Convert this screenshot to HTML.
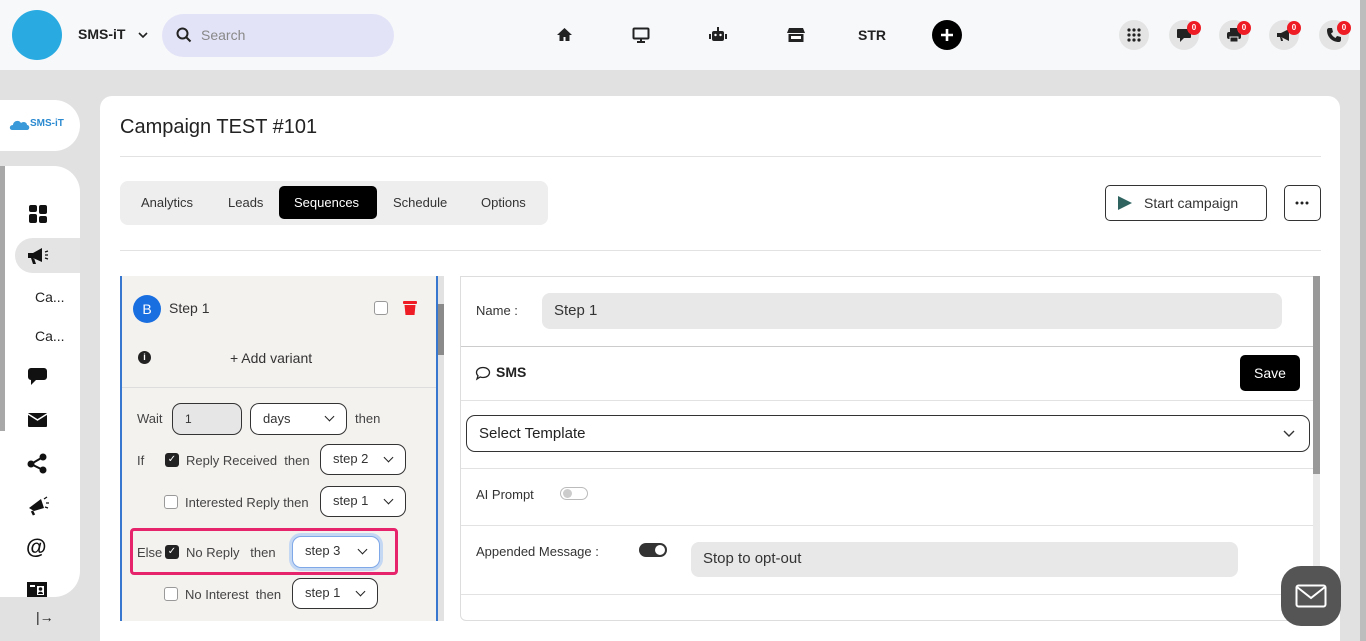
<!DOCTYPE html>
<html style="overflow:hidden;width:1366px;height:641px"><head><meta charset="utf-8"><style>
*{box-sizing:border-box;margin:0;padding:0}
body{width:1366px;height:641px;overflow:hidden;background:#e1e1e1;font-family:"Liberation Sans",sans-serif;color:#222;position:relative}
.a{position:absolute}
.top{left:0;top:0;width:1360px;height:70px;background:#f7f8fa}
.ic{width:30px;height:30px;border-radius:50%;background:#e4e4e4}
.badge{width:14px;height:14px;border-radius:50%;background:#ee1c25;color:#fff;font-size:8px;font-weight:bold;text-align:center;line-height:14px}
.sel{border:1px solid #333;border-radius:9px;background:#fff;font-size:13px;color:#333;padding-left:12px;line-height:28px}
.chev{position:absolute;right:13px;top:9px;width:7px;height:7px;border-right:1.6px solid #222;border-bottom:1.6px solid #222;transform:rotate(45deg)}
.cb{width:14px;height:14px;border:1px solid #999;border-radius:3px;background:#fff}
.cbk{width:14px;height:14px;border-radius:3px;background:#222;color:#fff;font-size:10px;text-align:center;line-height:14px}
.t13{font-size:13px;color:#444}
</style></head><body>
<div class="a top"></div>
<div class="a" style="left:1360px;top:0;width:6px;height:641px;background:#bdbdbd"></div>
<div class="a" style="left:12px;top:10px;width:50px;height:50px;border-radius:50%;background:#29abe2"></div>
<div class="a" style="left:78px;top:26px;font-size:14px;font-weight:bold">SMS-iT</div>
<svg class="a" style="left:137px;top:30px" width="12" height="10"><path d="M2 3l4 4 4-4" stroke="#222" stroke-width="1.6" fill="none"/></svg>
<div class="a" style="left:162px;top:14px;width:232px;height:43px;border-radius:22px;background:#e3e3f7"></div>
<svg class="a" style="left:176px;top:27px" width="16" height="16"><circle cx="6.5" cy="6.5" r="5" stroke="#222" stroke-width="2" fill="none"/><path d="M10 10l4.5 4.5" stroke="#222" stroke-width="2"/></svg>
<div class="a" style="left:201px;top:27px;font-size:14px;color:#888">Search</div>
<svg class="a" style="left:556px;top:27px" width="17" height="15"><path d="M8.5 1L1 8h2.5v6h4v-4h2v4h4V8H16z" fill="#222"/></svg>
<svg class="a" style="left:632px;top:27px" width="18" height="16"><rect x="1.5" y="1.5" width="15" height="10" rx="1" stroke="#222" stroke-width="2" fill="none"/><path d="M5 15h8M9 12v3" stroke="#222" stroke-width="2"/></svg>
<svg class="a" style="left:709px;top:26px" width="18" height="17"><rect x="3" y="5" width="12" height="10" rx="2" fill="#222"/><rect x="0" y="8" width="2" height="5" fill="#222"/><rect x="16" y="8" width="2" height="5" fill="#222"/><rect x="8" y="1" width="2" height="4" fill="#222"/><circle cx="6.5" cy="9" r="1.2" fill="#fff"/><circle cx="11.5" cy="9" r="1.2" fill="#fff"/></svg>
<svg class="a" style="left:787px;top:27px" width="18" height="15"><path d="M2 1h14l2 5H0z" fill="#222"/><rect x="1.5" y="7" width="15" height="8" fill="#222"/><rect x="4" y="9" width="10" height="3" fill="#fff"/></svg>
<div class="a" style="left:858px;top:27px;font-size:14px;font-weight:bold">STR</div>
<div class="a" style="left:932px;top:20px;width:30px;height:30px;border-radius:50%;background:#000"></div>
<svg class="a" style="left:939px;top:27px" width="16" height="16"><path d="M8 2v12M2 8h12" stroke="#fff" stroke-width="2.6"/></svg>
<div class="a ic" style="left:1119px;top:20px"></div>
<svg class="a" style="left:1126px;top:27px" width="16" height="16"><g fill="#222"><circle cx="3" cy="3" r="1.6"/><circle cx="8" cy="3" r="1.6"/><circle cx="13" cy="3" r="1.6"/><circle cx="3" cy="8" r="1.6"/><circle cx="8" cy="8" r="1.6"/><circle cx="13" cy="8" r="1.6"/><circle cx="3" cy="13" r="1.6"/><circle cx="8" cy="13" r="1.6"/><circle cx="13" cy="13" r="1.6"/></g></svg>
<div class="a ic" style="left:1169px;top:20px"></div><svg class="a" style="left:1176px;top:28px" width="16" height="15"><path d="M2 1h12a1 1 0 011 1v7a1 1 0 01-1 1H8l-4 4v-4H2a1 1 0 01-1-1V2a1 1 0 011-1z" fill="#222"/></svg>
<div class="a ic" style="left:1219px;top:20px"></div><svg class="a" style="left:1226px;top:27px" width="16" height="16"><rect x="4" y="1" width="8" height="4" fill="#222"/><rect x="1" y="5" width="14" height="7" rx="2" fill="#222"/><rect x="4" y="10" width="8" height="5" fill="#222" stroke="#e4e4e4" stroke-width="1"/></svg>
<div class="a ic" style="left:1269px;top:20px"></div><svg class="a" style="left:1276px;top:28px" width="16" height="14"><path d="M1 5h4l8-4v12l-8-4H1z M4 9l1 4h2l-1-4" fill="#222"/></svg>
<div class="a ic" style="left:1319px;top:20px"></div><svg class="a" style="left:1326px;top:27px" width="16" height="16"><path d="M3 1l3 0 1 4-2 1.5c1 2 2.5 3.5 4.5 4.5L11 9l4 1v3c0 1-1 2-2 2C6 15 1 10 1 3c0-1 1-2 2-2z" fill="#222"/></svg>
<div class="a badge" style="left:1187px;top:21px">0</div>
<div class="a badge" style="left:1237px;top:21px">0</div>
<div class="a badge" style="left:1287px;top:21px">0</div>
<div class="a badge" style="left:1337px;top:21px">0</div>

<!-- sidebar -->
<div class="a" style="left:0;top:100px;width:80px;height:51px;background:#fff;border-radius:0 26px 26px 0"></div>
<svg class="a" style="left:9px;top:117px" width="24" height="14"><path d="M3 13c-3 0-3-5 1-5 0-4 6-6 8-2 2-2 6-1 6 2 3 0 3 5 0 5z" fill="#3a9ad9"/></svg>
<div class="a" style="left:30px;top:118px;font-size:10px;font-weight:bold;color:#2b8ad0">SMS-iT</div>
<div class="a" style="left:0;top:166px;width:80px;height:431px;background:#fff;border-radius:0 26px 26px 0"></div>
<div class="a" style="left:0;top:166px;width:5px;height:265px;background:#a8a8a8"></div>
<div class="a" style="left:15px;top:238px;width:65px;height:35px;background:#e4e4e4;border-radius:18px 0 0 18px"></div>
<svg class="a" style="left:29px;top:205px" width="18" height="18"><g fill="#111"><rect x="0" y="0" width="8" height="7" rx="2"/><rect x="10" y="0" width="8" height="9" rx="2"/><rect x="0" y="9" width="8" height="9" rx="2"/><rect x="10" y="11" width="8" height="7" rx="2"/></g></svg>
<svg class="a" style="left:27px;top:247px" width="22" height="18"><path d="M1 6h5l9-5v14l-9-4H1z M4 11l2 6h3l-2-6" fill="#111"/><path d="M18 5l3-1M18 8h3M18 11l3 1" stroke="#111" stroke-width="1.3"/></svg>
<div class="a" style="left:35px;top:289px;font-size:14px;color:#222">Ca...</div>
<div class="a" style="left:35px;top:328px;font-size:14px;color:#222">Ca...</div>
<svg class="a" style="left:27px;top:367px" width="21" height="20"><path d="M4 1h13a3 3 0 013 3v6a3 3 0 01-3 3H9l-5 5v-5a3 3 0 01-3-3V4a3 3 0 013-3z" fill="#111"/></svg>
<svg class="a" style="left:28px;top:413px" width="19" height="14"><rect width="19" height="14" rx="1" fill="#111"/><path d="M0 1l9.5 6 9.5-6" stroke="#fff" stroke-width="1.5" fill="none"/></svg>
<svg class="a" style="left:27px;top:453px" width="20" height="21"><circle cx="16" cy="4" r="3.5" fill="#111"/><circle cx="4" cy="11" r="3.5" fill="#111"/><circle cx="16" cy="17" r="3.5" fill="#111"/><path d="M16 4L4 11l12 6" stroke="#111" stroke-width="2" fill="none"/></svg>
<svg class="a" style="left:27px;top:496px" width="22" height="20"><path d="M2 12l12-9 3 9-10 3z" fill="#111"/><path d="M5 15l2 4" stroke="#111" stroke-width="2.5"/><path d="M17 3l3-2M19 7h3M18 11l3 1" stroke="#111" stroke-width="1.3"/></svg>
<div class="a" style="left:26px;top:536px;font-size:21px;font-weight:bold;color:#111">@</div>
<svg class="a" style="left:27px;top:582px" width="20" height="15"><rect width="20" height="15" fill="#111"/><rect x="3" y="3" width="5" height="2" fill="#fff"/><rect x="10" y="4" width="7" height="9" fill="#fff"/><circle cx="13.5" cy="7" r="1.8" fill="#111"/><path d="M11 12c0-3 5-3 5 0z" fill="#111"/></svg>
<div class="a" style="left:36px;top:609px;font-size:14px;color:#222">|→</div>

<!-- main card -->
<div class="a" style="left:100px;top:96px;width:1240px;height:545px;background:#fff;border-radius:12px 12px 0 0"></div>
<div class="a" style="left:120px;top:116px;font-size:20px;color:#222">Campaign TEST #101</div>
<div class="a" style="left:120px;top:156px;width:1201px;height:1px;background:#e2e2e2"></div>
<div class="a" style="left:120px;top:181px;width:428px;height:44px;background:#eeeeee;border-radius:8px"></div>
<div class="a t13" style="left:141px;top:195px;color:#333">Analytics</div>
<div class="a t13" style="left:228px;top:195px;color:#333">Leads</div>
<div class="a" style="left:279px;top:186px;width:98px;height:33px;background:#000;border-radius:5px"></div>
<div class="a" style="left:294px;top:195px;font-size:13px;color:#fff">Sequences</div>
<div class="a t13" style="left:393px;top:195px;color:#333">Schedule</div>
<div class="a t13" style="left:481px;top:195px;color:#333">Options</div>
<div class="a" style="left:1105px;top:185px;width:162px;height:36px;border:1px solid #333;border-radius:5px"></div>
<svg class="a" style="left:1117px;top:195px" width="16" height="16"><path d="M1 1l14 7-14 7z" fill="#2e6360"/></svg>
<div class="a" style="left:1144px;top:195px;font-size:14px;color:#333">Start campaign</div>
<div class="a" style="left:1284px;top:185px;width:37px;height:36px;border:1px solid #333;border-radius:5px"></div>
<svg class="a" style="left:1295px;top:201px" width="14" height="4"><circle cx="2" cy="2" r="1.5" fill="#222"/><circle cx="7" cy="2" r="1.5" fill="#222"/><circle cx="12" cy="2" r="1.5" fill="#222"/></svg>
<div class="a" style="left:120px;top:250px;width:1201px;height:1px;background:#e2e2e2"></div>

<!-- step panel -->
<div class="a" style="left:120px;top:276px;width:318px;height:345px;background:#f4f2ef;border-left:2px solid #3777d0;border-right:2px solid #3777d0"></div>
<div class="a" style="left:438px;top:276px;width:6px;height:345px;background:#e2e2e2"></div>
<div class="a" style="left:438px;top:304px;width:6px;height:51px;background:#8a8a8a"></div>
<div class="a" style="left:133px;top:295px;width:28px;height:28px;border-radius:50%;background:#1a6fe0;color:#fff;font-size:14px;text-align:center;line-height:28px">B</div>
<div class="a" style="left:169px;top:300px;font-size:14px;color:#333">Step 1</div>
<div class="a cb" style="left:374px;top:301px"></div>
<svg class="a" style="left:403px;top:300px" width="14" height="16"><rect x="0" y="1" width="14" height="3" rx="1" fill="#ee1c25"/><path d="M1.5 5h11l-1 10H2.5z" fill="#ee1c25"/></svg>
<div class="a" style="left:138px;top:351px;width:13px;height:13px;border-radius:50%;background:#222;color:#fff;font-size:9px;font-weight:bold;text-align:center;line-height:13px">i</div>
<div class="a" style="left:230px;top:350px;font-size:14px;color:#333">+ Add variant</div>
<div class="a" style="left:122px;top:387px;width:314px;height:1px;background:#ddd"></div>
<div class="a t13" style="left:137px;top:411px">Wait</div>
<div class="a" style="left:172px;top:403px;width:70px;height:32px;border:1px solid #333;border-radius:9px;background:#e6e6e6;font-size:12px;color:#333;padding:8px 12px">1</div>
<div class="a sel" style="left:250px;top:403px;width:97px;height:32px;line-height:30px">days<span class="chev"></span></div>
<div class="a t13" style="left:355px;top:411px">then</div>
<div class="a t13" style="left:137px;top:453px">If</div>
<div class="a cbk" style="left:165px;top:453px">✓</div>
<div class="a t13" style="left:186px;top:453px">Reply Received &nbsp;then</div>
<div class="a sel" style="left:320px;top:444px;width:86px;height:31px">step 2<span class="chev"></span></div>
<div class="a cb" style="left:164px;top:495px"></div>
<div class="a t13" style="left:185px;top:495px">Interested Reply then</div>
<div class="a sel" style="left:320px;top:486px;width:86px;height:31px">step 1<span class="chev"></span></div>
<div class="a" style="left:130px;top:528px;width:268px;height:47px;border:3px solid #e5246b;border-radius:4px"></div>
<div class="a t13" style="left:137px;top:545px">Else</div>
<div class="a cbk" style="left:165px;top:545px">✓</div>
<div class="a t13" style="left:186px;top:545px">No Reply &nbsp;&nbsp;then</div>
<div class="a sel" style="left:292px;top:536px;width:88px;height:32px;border:1px solid #7fa8e8;box-shadow:0 0 0 3px #c4d7f3">step 3<span class="chev"></span></div>
<div class="a cb" style="left:164px;top:587px"></div>
<div class="a t13" style="left:185px;top:587px">No Interest &nbsp;then</div>
<div class="a sel" style="left:292px;top:578px;width:86px;height:31px">step 1<span class="chev"></span></div>

<!-- right panel -->
<div class="a" style="left:460px;top:276px;width:855px;height:345px;border:1px solid #ddd;border-radius:0 0 6px 6px;background:#fff"></div>
<div class="a" style="left:1313px;top:276px;width:7px;height:345px;background:#eaeaea"></div>
<div class="a" style="left:1313px;top:276px;width:7px;height:198px;background:#999"></div>
<div class="a t13" style="left:476px;top:303px;color:#333">Name :</div>
<div class="a" style="left:542px;top:293px;width:740px;height:36px;border-radius:8px;background:#e8e8e8;font-size:15px;color:#333;padding:9px 12px">Step 1</div>
<div class="a" style="left:461px;top:346px;width:852px;height:1px;background:#ccc"></div>
<svg class="a" style="left:475px;top:366px" width="16" height="15"><path d="M8 1.5c4 0 6.5 2.3 6.5 5s-2.5 5-6.5 5c-1 0-2-.2-2.8-.5L2 13l1-3.2C2 8.8 1.5 7.7 1.5 6.5c0-2.7 2.5-5 6.5-5z" stroke="#222" stroke-width="1.3" fill="none"/></svg>
<div class="a" style="left:496px;top:364px;font-size:14px;font-weight:bold;color:#222">SMS</div>
<div class="a" style="left:1240px;top:355px;width:60px;height:36px;background:#000;border-radius:5px;color:#fff;font-size:14px;text-align:center;line-height:36px">Save</div>
<div class="a" style="left:461px;top:400px;width:852px;height:1px;background:#e2e2e2"></div>
<div class="a" style="left:466px;top:415px;width:844px;height:37px;border:1px solid #333;border-radius:9px;font-size:15px;color:#222;padding:9px 12px">Select Template</div>
<svg class="a" style="left:1283px;top:430px" width="12" height="8"><path d="M1 1l5 5 5-5" stroke="#333" stroke-width="1.4" fill="none"/></svg>
<div class="a" style="left:461px;top:468px;width:852px;height:1px;background:#e2e2e2"></div>
<div class="a t13" style="left:476px;top:487px;color:#333">AI Prompt</div>
<div class="a" style="left:560px;top:487px;width:28px;height:13px;border:1px solid #bbb;border-radius:7px"></div>
<div class="a" style="left:563px;top:489px;width:9px;height:9px;border-radius:50%;background:#ccc"></div>
<div class="a" style="left:461px;top:525px;width:852px;height:1px;background:#e2e2e2"></div>
<div class="a t13" style="left:476px;top:544px;color:#333">Appended Message :</div>
<div class="a" style="left:639px;top:543px;width:28px;height:14px;border-radius:7px;background:#333"></div>
<div class="a" style="left:655px;top:545px;width:10px;height:10px;border-radius:50%;background:#fff"></div>
<div class="a" style="left:691px;top:542px;width:547px;height:35px;border-radius:8px;background:#e8e8e8;font-size:15px;color:#333;padding:8px 12px">Stop to opt-out</div>
<div class="a" style="left:461px;top:594px;width:852px;height:1px;background:#e2e2e2"></div>
<div class="a" style="left:1281px;top:566px;width:60px;height:60px;border-radius:20px;background:#555"></div>
<svg class="a" style="left:1295px;top:584px" width="32" height="24"><rect x="1.5" y="1.5" width="29" height="21" rx="2" stroke="#fff" stroke-width="2" fill="none"/><path d="M2 3l14 11 14-11" stroke="#fff" stroke-width="2" fill="none"/></svg>
</body></html>
